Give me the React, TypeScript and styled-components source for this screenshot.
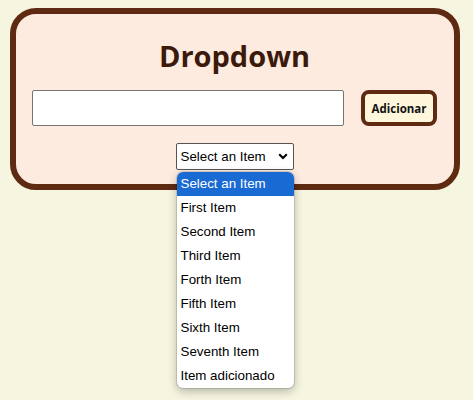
import React from "react";
import styled, { createGlobalStyle } from "styled-components";

const Global = createGlobalStyle`
  html, body { margin: 0; padding: 0; }
  html { min-height: 100%; background: #f5f5e0; }
  body {
    box-sizing: border-box;
    min-height: 400px;
    background: #f5f5e0;
    padding: 8px 13px 0 10px;
    font-family: "Liberation Sans", Arial, sans-serif;
  }
`;

const Card = styled.div`
  box-sizing: border-box;
  width: 450px;
  height: 182px;
  border: 6px solid #5e2a12;
  border-radius: 26px;
  background: #fdebe0;
  padding: 22px 17px 14px 16px;
  display: flex;
  flex-direction: column;
  align-items: center;
`;

const Title = styled.h1`
  margin: 0;
  height: 40px;
  line-height: 40px;
  font-family: "Comic Sans MS", "Open Sans", sans-serif;
  font-size: 29px;
  font-weight: 700;
  color: #3b1a0c;
`;

const Row = styled.div`
  margin-top: 14px;
  display: flex;
  align-self: stretch;
  gap: 17px;
`;

const TextInput = styled.input`
  box-sizing: border-box;
  flex: 1;
  height: 36px;
  border: 1px solid #767676;
  border-radius: 2px;
  background: #fff;
  padding: 0 6px;
`;

const AddButton = styled.button`
  box-sizing: border-box;
  width: 76px;
  height: 36px;
  border: 4px solid #5e2a12;
  border-radius: 8px;
  background: #fff6dc;
  padding: 0;
  font-family: "Comic Sans MS", "Open Sans", sans-serif;
  font-size: 11.5px;
  font-weight: 700;
  color: #111;
`;

const SelectWrap = styled.div`
  position: relative;
  margin-top: 17px;
`;

const SelectBox = styled.div`
  box-sizing: border-box;
  width: 118px;
  height: 27px;
  border: 1px solid #555;
  border-radius: 2px;
  background: #fff;
  display: flex;
  align-items: center;
  justify-content: space-between;
  padding: 0 5px 0 4px;
  font-size: 13.33px;
  color: #000;
`;

const List = styled.div`
  position: absolute;
  top: 29px;
  left: 1px;
  width: 117px;
  height: 216px;
  display: flex;
  flex-direction: column;
  background: #fff;
  border-radius: 6px;
  box-shadow: 0 3px 10px rgba(0, 0, 0, 0.28), 0 0 0 1px rgba(0, 0, 0, 0.12);
  z-index: 5;
`;

const Option = styled.div<{ $active?: boolean }>`
  flex: none;
  height: 24px;
  line-height: 24px;
  padding-left: 4px;
  font-size: 13.33px;
  color: ${(p) => (p.$active ? "#fff" : "#000")};
  background: ${(p) => (p.$active ? "#1a6ad4" : "transparent")};
  white-space: nowrap;
  &:first-child { border-radius: 6px 6px 0 0; }
`;

const items = [
  "Select an Item",
  "First Item",
  "Second Item",
  "Third Item",
  "Forth Item",
  "Fifth Item",
  "Sixth Item",
  "Seventh Item",
  "Item adicionado",
];

export default function App() {
  return (
    <>
      <Global />
      <Card>
        <Title>Dropdown</Title>
        <Row>
          <TextInput type="text" />
          <AddButton>Adicionar</AddButton>
        </Row>
        <SelectWrap>
          <SelectBox>
            <span>Select an Item</span>
            <svg width="10" height="7" viewBox="0 0 10 7">
              <path d="M1.2 1.2 L5 5 L8.8 1.2" fill="none" stroke="#000" strokeWidth="2" />
            </svg>
          </SelectBox>
          <List>
            {items.map((it, i) => (
              <Option key={it} $active={i === 0}>
                {it}
              </Option>
            ))}
          </List>
        </SelectWrap>
      </Card>
    </>
  );
}
